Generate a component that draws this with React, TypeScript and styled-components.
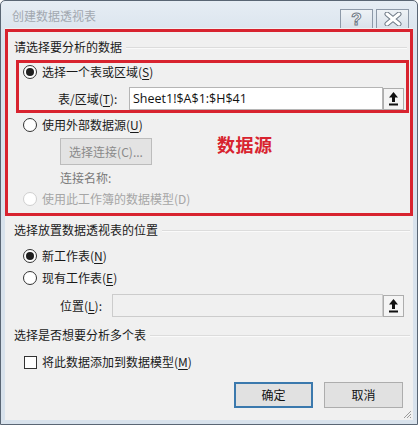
import React from 'react'
import styled, { createGlobalStyle } from 'styled-components'

const GlobalStyle = createGlobalStyle`
  html, body {
    margin: 0;
    padding: 0;
    background: #ffffff;
  }
  * {
    box-sizing: border-box;
  }
`

const FONT = `"Noto Sans CJK SC", "Noto Sans", sans-serif`

const Window = styled.div`
  width: 418px;
  height: 425px;
  border: 1px solid #5a6674;
  border-radius: 5px 5px 0 0;
  background: linear-gradient(#e6edf4, #d8e2ec 40px, #d8e2ec);
  display: flex;
  flex-direction: column;
  font-family: ${FONT};
  font-size: 12px;
  color: #1a1a1a;
`

const TitleBar = styled.div`
  height: 27px;
  display: flex;
  align-items: center;
  justify-content: space-between;
  padding: 0 8px 0 11px;
`

const Title = styled.span`
  color: #a2a8b0;
  font-size: 12px;
  line-height: 16px;
  margin-top: 3px;
`

const Controls = styled.div`
  align-self: flex-end;
  display: flex;
  gap: 3px;
`

const CaptionButton = styled.div`
  width: 33px;
  height: 19px;
  border: 1px solid #8d99a8;
  border-bottom: none;
  background: linear-gradient(#eef2f6, #d9e1ea);
  display: flex;
  align-items: center;
  justify-content: center;
`

const HelpMark = styled.span`
  font-family: "Liberation Sans", sans-serif;
  font-size: 17px;
  font-weight: 700;
  line-height: 17px;
  color: #ffffff;
  -webkit-text-stroke: 1px #6f7a87;
  margin-top: 1px;
`

const Body = styled.div`
  position: relative;
  flex: 1;
  margin: 0 4px 4px 4px;
  background: #f0f0f0;
  display: flex;
  flex-direction: column;
`

const RedBox = styled.div<{ $inner?: boolean }>`
  border: 3px solid #d8232f;
  display: flex;
  flex-direction: column;
  position: relative;
  margin: ${(p) => (p.$inner ? '5px 1px 0 8px' : '1px 0 0 0')};
  padding: ${(p) => (p.$inner ? '1px 0 0 4px' : '0 0 6px 0')};
`

const GroupTitle = styled.div<{ $top: number; $left: number }>`
  display: flex;
  align-items: center;
  gap: 4px;
  height: 16px;
  line-height: 16px;
  margin: ${(p) => `${p.$top}px 3px 0 ${p.$left}px`};
  white-space: nowrap;
  &::after {
    content: '';
    flex: 1;
    height: 1px;
    background: #dcdcdc;
    border-bottom: 1px solid #fafafa;
    margin-top: 2px;
  }
`

const OptionRow = styled.label<{ $top?: number; $left?: number; $disabled?: boolean }>`
  display: flex;
  align-items: center;
  gap: 5px;
  height: 16px;
  line-height: 16px;
  margin-top: ${(p) => p.$top ?? 0}px;
  margin-left: ${(p) => p.$left ?? 0}px;
  color: ${(p) => (p.$disabled ? '#a6a6a6' : '#1a1a1a')};
  white-space: nowrap;
  u {
    text-decoration-thickness: 1px;
    text-underline-offset: 2px;
  }
`

const Radio = styled.span<{ $checked?: boolean; $disabled?: boolean }>`
  width: 14px;
  height: 14px;
  border-radius: 50%;
  border: 1px solid ${(p) => (p.$disabled ? '#cfcfcf' : '#333333')};
  background: #ffffff;
  display: flex;
  align-items: center;
  justify-content: center;
  flex-shrink: 0;
  &::after {
    content: '';
    width: 8px;
    height: 8px;
    border-radius: 50%;
    background: ${(p) => (p.$checked ? '#1f1f1f' : 'transparent')};
  }
`

const CheckBox = styled.span`
  width: 13px;
  height: 13px;
  border: 1px solid #333333;
  background: #ffffff;
  flex-shrink: 0;
`

const FieldRow = styled.div<{ $top: number; $left: number; $labelWidth: number }>`
  display: flex;
  align-items: center;
  height: 23px;
  margin-top: ${(p) => p.$top}px;
  margin-left: ${(p) => p.$left}px;
  & > span:first-child {
    width: ${(p) => p.$labelWidth}px;
    white-space: nowrap;
    line-height: 16px;
  }
  u {
    text-underline-offset: 2px;
  }
`

const RefInput = styled.div<{ $width: number; $disabled?: boolean }>`
  width: ${(p) => p.$width}px;
  height: 23px;
  border: 1px solid ${(p) => (p.$disabled ? '#cccccc' : '#b5b5b5')};
  background: ${(p) => (p.$disabled ? '#f0f0f0' : '#ffffff')};
  font-family: "Open Sans", "Noto Sans", sans-serif;
  font-size: 12.5px;
  line-height: 21px;
  padding-left: 3px;
  color: #111111;
`

const PickButton = styled.div`
  width: 21px;
  height: 22px;
  border: 1px solid #adadad;
  background: #f4f4f4;
  display: flex;
  align-items: center;
  justify-content: center;
`

const GreyButton = styled.div`
  width: 92px;
  height: 27px;
  margin: 5px 0 0 52px;
  border: 1px solid #bcbcbc;
  background: #e3e3e3;
  color: #8a8a8a;
  line-height: 25px;
  text-align: center;
`

const Hint = styled.div`
  height: 16px;
  line-height: 16px;
  margin: 5px 0 0 52px;
  color: #7a7a7a;
`

const Annotation = styled.span`
  position: absolute;
  left: 209px;
  top: 100px;
  font-size: 18px;
  font-weight: 700;
  line-height: 24px;
  color: #d8232f;
  letter-spacing: 0.5px;
`

const Footer = styled.div`
  display: flex;
  justify-content: flex-end;
  gap: 11px;
  margin-top: 12px;
  padding-right: 10px;
`

const DialogButton = styled.div<{ $primary?: boolean }>`
  width: 79px;
  height: 26px;
  border: 1px solid ${(p) => (p.$primary ? '#3b79ad' : '#adadad')};
  box-shadow: ${(p) => (p.$primary ? 'inset 0 0 0 1px #3b79ad' : 'none')};
  background: #e1e1e1;
  line-height: 24px;
  text-align: center;
  color: #111111;
`

const Grip = styled.svg`
  position: absolute;
  right: 1px;
  bottom: 1px;
`

const UpArrow = () => (
  <svg width='11' height='15' viewBox='0 0 11 15'>
    <polygon points='5.5,1 10,6.5 7,6.5 7,11 4,11 4,6.5 1,6.5' fill='#111' />
    <rect x='1' y='12.5' width='9' height='2' fill='#111' />
  </svg>
)

const CloseIcon = () => (
  <svg width='20' height='14' viewBox='0 0 20 14'>
    <path d='M4 2 L16 12 M16 2 L4 12' stroke='#6f7a87' strokeWidth='5' strokeLinecap='round' />
    <path d='M4 2 L16 12 M16 2 L4 12' stroke='#ffffff' strokeWidth='3' strokeLinecap='round' />
  </svg>
)

const App = () => {
  return (
    <>
      <GlobalStyle />
      <Window>
        <TitleBar>
          <Title>创建数据透视表</Title>
          <Controls>
            <CaptionButton>
              <HelpMark>?</HelpMark>
            </CaptionButton>
            <CaptionButton>
              <CloseIcon />
            </CaptionButton>
          </Controls>
        </TitleBar>

        <Body>
          <RedBox>
            <GroupTitle $top={7} $left={6}>请选择要分析的数据</GroupTitle>

            <RedBox $inner>
              <OptionRow>
                <Radio $checked />
                <span>
                  选择一个表或区域(<u>S</u>)
                </span>
              </OptionRow>
              <FieldRow $top={7} $left={35} $labelWidth={71}>
                <span>
                  表/区域(<u>T</u>):
                </span>
                <RefInput $width={254}>Sheet1!$A$1:$H$41</RefInput>
                <PickButton>
                  <UpArrow />
                </PickButton>
              </FieldRow>
            </RedBox>

            <OptionRow $top={4} $left={15}>
              <Radio />
              <span>
                使用外部数据源(<u>U</u>)
              </span>
            </OptionRow>
            <GreyButton>选择连接(C)...</GreyButton>
            <Hint>连接名称:</Hint>
            <OptionRow $top={5} $left={15} $disabled>
              <Radio $disabled />
              <span>使用此工作簿的数据模型(D)</span>
            </OptionRow>

            <Annotation>数据源</Annotation>
          </RedBox>

          <GroupTitle $top={6} $left={9}>选择放置数据透视表的位置</GroupTitle>
          <OptionRow $top={10} $left={18}>
            <Radio $checked />
            <span>
              新工作表(<u>N</u>)
            </span>
          </OptionRow>
          <OptionRow $top={6} $left={18}>
            <Radio />
            <span>
              现有工作表(<u>E</u>)
            </span>
          </OptionRow>
          <FieldRow $top={8} $left={55} $labelWidth={52}>
            <span>
              位置(<u>L</u>):
            </span>
            <RefInput $width={271} $disabled />
            <PickButton>
              <UpArrow />
            </PickButton>
          </FieldRow>

          <GroupTitle $top={10} $left={9}>选择是否想要分析多个表</GroupTitle>
          <OptionRow $top={11} $left={19}>
            <CheckBox />
            <span>
              将此数据添加到数据模型(<u>M</u>)
            </span>
          </OptionRow>

          <Footer>
            <DialogButton $primary>确定</DialogButton>
            <DialogButton>取消</DialogButton>
          </Footer>

          <Grip width='10' height='10' viewBox='0 0 10 10'>
            <path d='M9 2 L2 9 M9 5 L5 9 M9 8 L8 9' stroke='#9a9a9a' strokeWidth='1' />
          </Grip>
        </Body>
      </Window>
    </>
  )
}

export default App
